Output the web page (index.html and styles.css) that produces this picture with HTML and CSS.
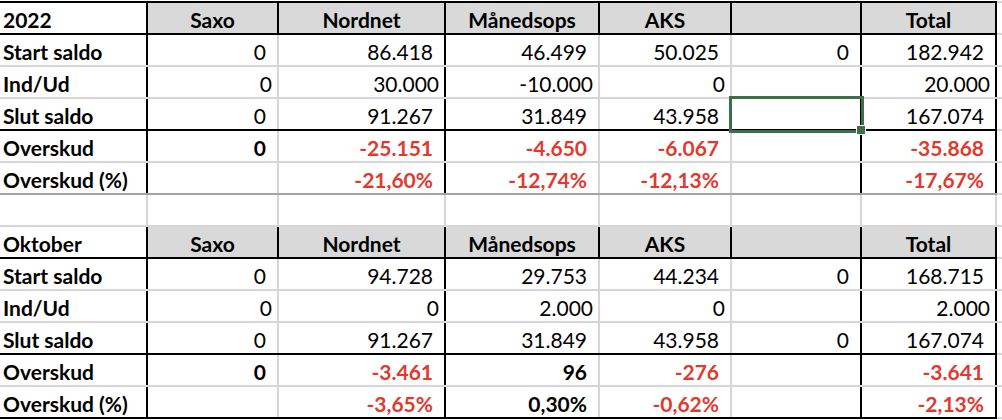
FILE: index.html
```html
<!DOCTYPE html>
<html lang="da">
<head>
<meta charset="utf-8">
<title>Portefølje 2022</title>
<link rel="stylesheet" href="styles.css">
</head>
<body>
<table class="sheet">
  <colgroup>
    <col class="c-label"><col class="c-saxo"><col class="c-nordnet"><col class="c-maaned"><col class="c-aks"><col class="c-blank"><col class="c-total"><col class="c-pad">
  </colgroup>
  <tbody>
    <tr class="head">
      <td class="label">2022</td><td>Saxo</td><td>Nordnet</td><td>Månedsops</td><td>AKS</td><td></td><td>Total</td><td class="pad"></td>
    </tr>
    <tr>
      <td class="label">Start saldo</td><td>0</td><td>86.418</td><td>46.499</td><td>50.025</td><td>0</td><td>182.942</td><td class="pad"></td>
    </tr>
    <tr class="flow">
      <td class="label">Ind/Ud</td><td>0</td><td>30.000</td><td>-10.000</td><td>0</td><td></td><td>20.000</td><td class="pad"></td>
    </tr>
    <tr class="end">
      <td class="label">Slut saldo</td><td>0</td><td>91.267</td><td>31.849</td><td>43.958</td><td class="selected"></td><td>167.074</td><td class="pad"></td>
    </tr>
    <tr class="sum">
      <td class="label">Overskud</td><td>0</td><td class="neg">-25.151</td><td class="neg">-4.650</td><td class="neg">-6.067</td><td></td><td class="neg">-35.868</td><td class="pad"></td>
    </tr>
    <tr class="sum last-soft">
      <td class="label">Overskud (%)</td><td></td><td class="neg">-21,60%</td><td class="neg">-12,74%</td><td class="neg">-12,13%</td><td></td><td class="neg">-17,67%</td><td class="pad"></td>
    </tr>
    <tr class="gap">
      <td class="label"></td><td></td><td></td><td></td><td></td><td></td><td></td><td class="pad"></td>
    </tr>
    <tr class="head">
      <td class="label">Oktober</td><td>Saxo</td><td>Nordnet</td><td>Månedsops</td><td>AKS</td><td></td><td>Total</td><td class="pad"></td>
    </tr>
    <tr>
      <td class="label">Start saldo</td><td>0</td><td>94.728</td><td>29.753</td><td>44.234</td><td>0</td><td>168.715</td><td class="pad"></td>
    </tr>
    <tr class="flow">
      <td class="label">Ind/Ud</td><td>0</td><td>0</td><td>2.000</td><td>0</td><td></td><td>2.000</td><td class="pad"></td>
    </tr>
    <tr class="end">
      <td class="label">Slut saldo</td><td>0</td><td>91.267</td><td>31.849</td><td>43.958</td><td>0</td><td>167.074</td><td class="pad"></td>
    </tr>
    <tr class="sum">
      <td class="label">Overskud</td><td>0</td><td class="neg">-3.461</td><td>96</td><td class="neg">-276</td><td></td><td class="neg">-3.641</td><td class="pad"></td>
    </tr>
    <tr class="sum last-hard">
      <td class="label">Overskud (%)</td><td></td><td class="neg">-3,65%</td><td>0,30%</td><td class="neg">-0,62%</td><td></td><td class="neg">-2,13%</td><td class="pad"></td>
    </tr>
  </tbody>
</table>
</body>
</html>
```

FILE: styles.css
```css
html, body {
  margin: 0;
  padding: 0;
  background: #ffffff;
  overflow: hidden;
}

body {
  font-family: "Lato", "Liberation Sans", sans-serif;
  font-size: 21px;
  color: #000000;
}

.sheet {
  border-collapse: collapse;
  table-layout: fixed;
  width: 1016px;
  margin-top: 1px;
}

.c-label { width: 147px; }
.c-saxo { width: 131px; }
.c-nordnet { width: 167px; }
.c-maaned { width: 154px; }
.c-aks { width: 132px; }
.c-blank { width: 130px; }
.c-total { width: 135px; }
.c-pad { width: 20px; }

.sheet td {
  height: 32px;
  box-sizing: border-box;
  padding: 3px 11px 0 3px;
  line-height: 24px;
  text-align: right;
  white-space: nowrap;
  border-right: 2px solid #d6d6d6;
  border-bottom: 2px solid #d6d6d6;
  border-left: none;
  border-top: none;
}

/* column group separators */
.sheet td:nth-child(1),
.sheet td:nth-child(3),
.sheet td:nth-child(6),
.sheet td:nth-child(7) {
  border-right-color: #000000;
}

.sheet td.label {
  text-align: left;
  font-weight: 700;
  padding-left: 3px;
}

.sheet td.pad {
  border-right-color: #d6d6d6;
}

/* header rows */
.head td {
  font-weight: 700;
  text-align: center;
  background: #d9d9d9;
  border-top: 2px solid #000000;
  border-bottom: 2px solid #000000;
  border-right-color: #000000;
  padding-right: 3px;
}

.head td.label {
  background: #ffffff;
}

.head td.pad {
  background: #ffffff;
  border-top-color: #d6d6d6;
  border-bottom-color: #d6d6d6;
  border-right-color: #d6d6d6;
}

/* in/out row uses a narrower number format */
.flow td {
  padding-right: 5px;
}

.end td {
  border-bottom-color: #000000;
}

.sum td {
  font-weight: 700;
}

.neg {
  color: #e2392f;
}

.last-soft td {
  border-bottom-color: #a3a3a3;
}

.last-hard td {
  border-bottom-color: #000000;
}

.end td.pad,
.last-hard td.pad,
.last-soft td.pad {
  border-bottom-color: #d6d6d6;
}

.gap td,
.gap td:nth-child(1),
.gap td:nth-child(3),
.gap td:nth-child(6),
.gap td:nth-child(7) {
  border-right-color: #d6d6d6;
}

/* active cell selection */
.sheet td.selected {
  position: relative;
}

.sheet td.selected::before {
  content: "";
  position: absolute;
  z-index: 1;
  top: -3px;
  left: -3px;
  right: -4px;
  bottom: -4px;
  border: 3px solid #3d7049;
}

.sheet td.selected::after {
  content: "";
  position: absolute;
  z-index: 2;
  right: -6px;
  bottom: -6px;
  width: 8px;
  height: 8px;
  background: #3d7049;
  border: 1px solid #ffffff;
}
```
